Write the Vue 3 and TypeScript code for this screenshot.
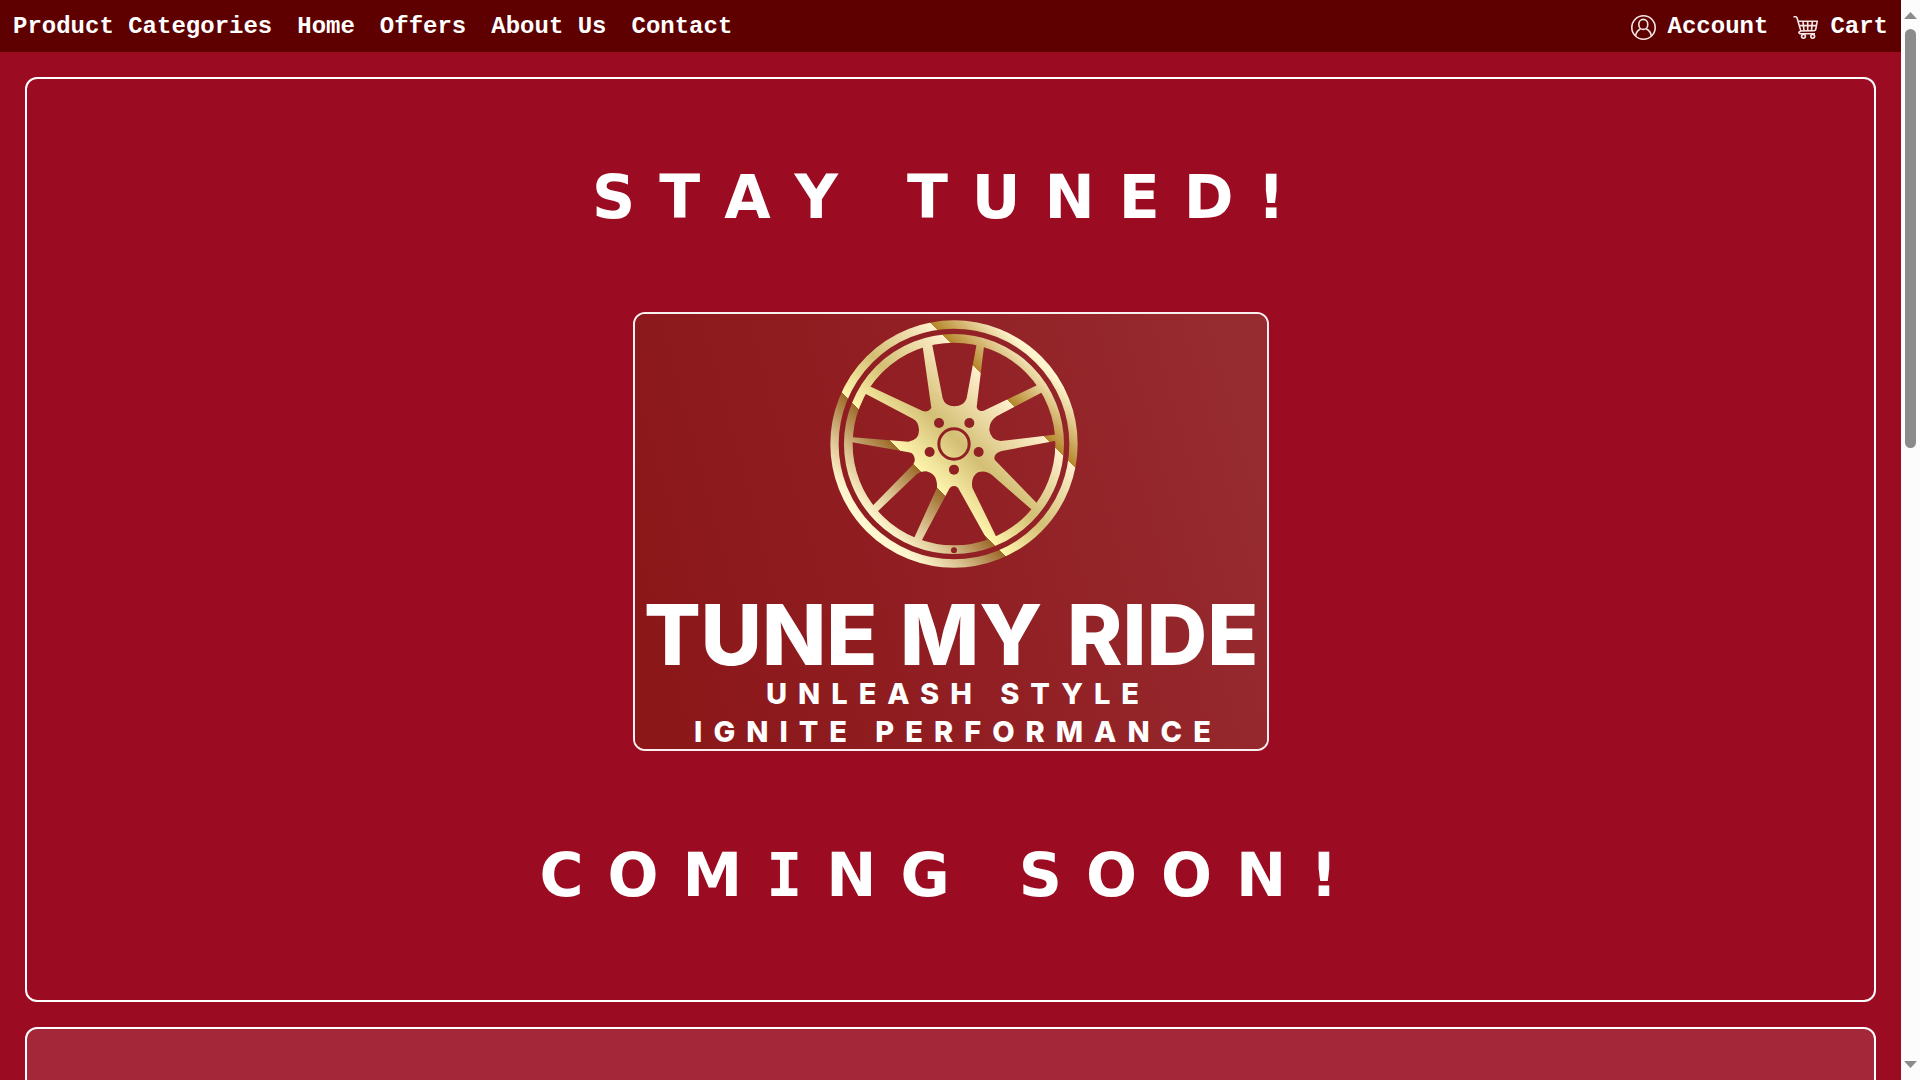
<script setup lang="ts">
interface NavLink {
  label: string
  href: string
}

const links: NavLink[] = [
  { label: 'Product Categories', href: '#categories' },
  { label: 'Home', href: '#home' },
  { label: 'Offers', href: '#offers' },
  { label: 'About Us', href: '#about' },
  { label: 'Contact', href: '#contact' },
]
</script>

<template>
  <div class="shell">
    <div class="page">
      <header class="topbar">
        <nav class="group" aria-label="Main">
          <a v-for="link in links" :key="link.label" class="link" :href="link.href">{{ link.label }}</a>
        </nav>
        <nav class="group" aria-label="Customer">
          <a class="link" href="#account">
            <svg class="icon" viewBox="0 0 25 25" aria-hidden="true">
              <circle cx="12.5" cy="12.5" r="11.7" />
              <ellipse cx="12.3" cy="9.4" rx="4.5" ry="5" />
              <path d="M4.6 20.9C5 17.6 6.800 15.300 9.500 13.800M15.200 13.800C18 15.300 19.900 17.600 20.300 20.900" />
            </svg>
            <span>Account</span>
          </a>
          <a class="link" href="#cart">
            <svg class="icon" viewBox="0 0 25 25" aria-hidden="true">
              <path d="M.5 1.700H2.800Q3.700 1.700 4 2.700L7.800 15.900M5 6.200H24.200L22.800 14.200Q22.600 15.500 21.300 15.600L8 16Q5.600 16.600 6 17.800Q6.300 18.800 8 18.800H22" />
              <path d="M6.200 10.600H23.400M10 6.200L11 15.800M14.700 6.200V15.700M19.400 6.200L18.500 15.700" />
              <circle cx="10.500" cy="21.300" r="1.900" />
              <circle cx="19.700" cy="21.300" r="1.900" />
            </svg>
            <span>Cart</span>
          </a>
        </nav>
      </header>

      <main class="content">
        <section class="panel hero">
          <h1 class="headline">STAY TUNED!</h1>
          <svg class="logo" viewBox="0 0 632 435" role="img" aria-label="Tune My Ride">
            <defs>
              <linearGradient id="plate" gradientUnits="userSpaceOnUse" x1="0" y1="300" x2="620" y2="130">
                <stop offset="0" stop-color="#8b1719" />
                <stop offset="0.5" stop-color="#911f23" />
                <stop offset="1" stop-color="#962b30" />
              </linearGradient>
              <linearGradient id="gold" gradientUnits="userSpaceOnUse" x1="139.500" y1="679.500" x2="664.500" y2="154.500">
                <stop offset="0" stop-color="#fff9d2" />
                <stop offset="0.06" stop-color="#fdf4cc" />
                <stop offset="0.17" stop-color="#dcc493" />
                <stop offset="0.326" stop-color="#9c6a2a" />
                <stop offset="0.326" stop-color="#fff5ae" />
                <stop offset="0.52" stop-color="#d3bf74" />
                <stop offset="0.779" stop-color="#ffefcd" />
                <stop offset="0.779" stop-color="#b5862a" />
                <stop offset="0.98" stop-color="#fff6d0" />
                <stop offset="1" stop-color="#fff6d0" />
              </linearGradient>
              <mask id="wheel" maskUnits="userSpaceOnUse" x="0" y="0" width="810" height="810">
                <circle cx="402" cy="417" r="358.500" fill="none" stroke="#fff" stroke-width="25" />
                <circle cx="402" cy="417" r="317" fill="none" stroke="#fff" stroke-width="26" />
                <path
                  fill="#fff"
                  d="M307 118L335 110L368 280Q375 304 403 304Q432 304 440 280L471 112L493 116L470 306Q474 321 491 317L660 236L674 258L530 334Q507 350 508 375Q512 405 542 408L714 388L716 406L545 438Q519 446 524 464L656 600L641 619L516 510Q497 494 474 502Q452 515 457 548L532 702L508 716L418 555Q413 543 402 543Q391 543 386 555L300 716L280 704L351 548Q353 505 318 499Q302 498 290 508L168 624L152 608L280 478Q290 460 278 447Q273 443 266 442L88 410L90 396L265 410Q298 405 297 375Q296 350 280 342L128 262L143 241L308 318Q325 323 334 308Z"
                />
                <circle cx="402" cy="417" r="45.500" fill="none" stroke="#000" stroke-width="9" />
                <circle cx="357" cy="354" r="15" />
                <circle cx="448" cy="354" r="15" />
                <circle cx="329" cy="441" r="15" />
                <circle cx="476" cy="441" r="15" />
                <circle cx="402" cy="494" r="15" />
                <circle cx="402" cy="736" r="9" />
              </mask>
            </defs>
            <rect width="632" height="435" fill="url(#plate)" />
            <g transform="translate(185 -9) scale(0.3333)">
              <rect width="810" height="810" fill="url(#gold)" mask="url(#wheel)" />
            </g>
            <g class="wordmark">
              <text x="9" y="351">TUNE</text>
              <text x="265" y="351">MY</text>
              <text x="432" y="351">RIDE</text>
            </g>
            <text class="tagline" x="323" y="390">UNLEASH STYLE</text>
            <text class="tagline" x="323" y="428">IGNITE PERFORMANCE</text>
          </svg>
          <p class="headline">COM<span class="slab">I</span>NG SOON!</p>
        </section>

        <section class="panel next" aria-label="Offers"></section>
      </main>
    </div>

    <div class="scrollbar" aria-hidden="true">
      <svg class="arrow" viewBox="0 0 13 7"><path d="M6.500 0L13 7H0Z" /></svg>
      <div class="track"><div class="thumb"></div></div>
      <svg class="arrow" viewBox="0 0 13 7"><path d="M0 0H13L6.500 7Z" /></svg>
    </div>
  </div>
</template>

<style>
body {
  margin: 0;
  background: #9b0b22;
}
</style>

<style scoped>
.shell {
  display: flex;
  height: 100vh;
  overflow: hidden;
}

.page {
  flex: 1;
  min-width: 0;
  overflow: hidden;
  background: #9b0b22;
  color: #fff;
}

.topbar {
  display: flex;
  justify-content: space-between;
  align-items: center;
  box-sizing: border-box;
  height: 52px;
  padding: 2px 13px 0;
  background: #5e0000;
}

.group {
  display: flex;
  align-items: center;
  gap: 25px;
}

.link {
  display: flex;
  align-items: center;
  gap: 12px;
  color: #fff;
  font: bold 24px/28px "Courier New", "Liberation Mono", monospace;
  text-decoration: none;
  white-space: nowrap;
}

.icon {
  width: 25px;
  height: 25px;
  fill: none;
  stroke: #f4e6e6;
  stroke-width: 1.6;
}

.content {
  display: flex;
  flex-direction: column;
  gap: 25px;
  padding: 25px;
}

.panel {
  border: 2px solid #fff;
  border-radius: 12px;
}

.hero {
  display: flex;
  flex-direction: column;
  align-items: center;
  gap: 78px;
  padding: 82px 0 88px;
}

.headline {
  margin: 0;
  font: bold 60px/73px Verdana, "DejaVu Sans", sans-serif;
  font-kerning: none;
  letter-spacing: 24px;
  white-space: nowrap;
}

.logo + .headline {
  margin-top: 10px;
}

.slab {
  font-family: Verdana, "DejaVu Sans Mono", monospace;
}

.logo {
  display: block;
  width: 632px;
  max-width: 100%;
  border: 2px solid #fbeeee;
  border-radius: 12px;
}

.wordmark {
  fill: #fff;
  font: 800 84px Inter, sans-serif;
}

.tagline {
  fill: #fff;
  font: 800 29px Inter, sans-serif;
  letter-spacing: 11px;
  text-anchor: middle;
}

.next {
  min-height: 400px;
  background: #a42639;
}

.scrollbar {
  display: flex;
  flex-direction: column;
  align-items: center;
  box-sizing: border-box;
  width: 19px;
  padding: 12px 0;
  background: #fcfcfc;
}

.arrow {
  width: 13px;
  height: 7px;
  fill: #8b8b8b;
}

.track {
  flex: 1;
  padding: 10px 0;
}

.thumb {
  width: 11px;
  height: 41%;
  border-radius: 6px;
  background: #8b8b8b;
}
</style>
